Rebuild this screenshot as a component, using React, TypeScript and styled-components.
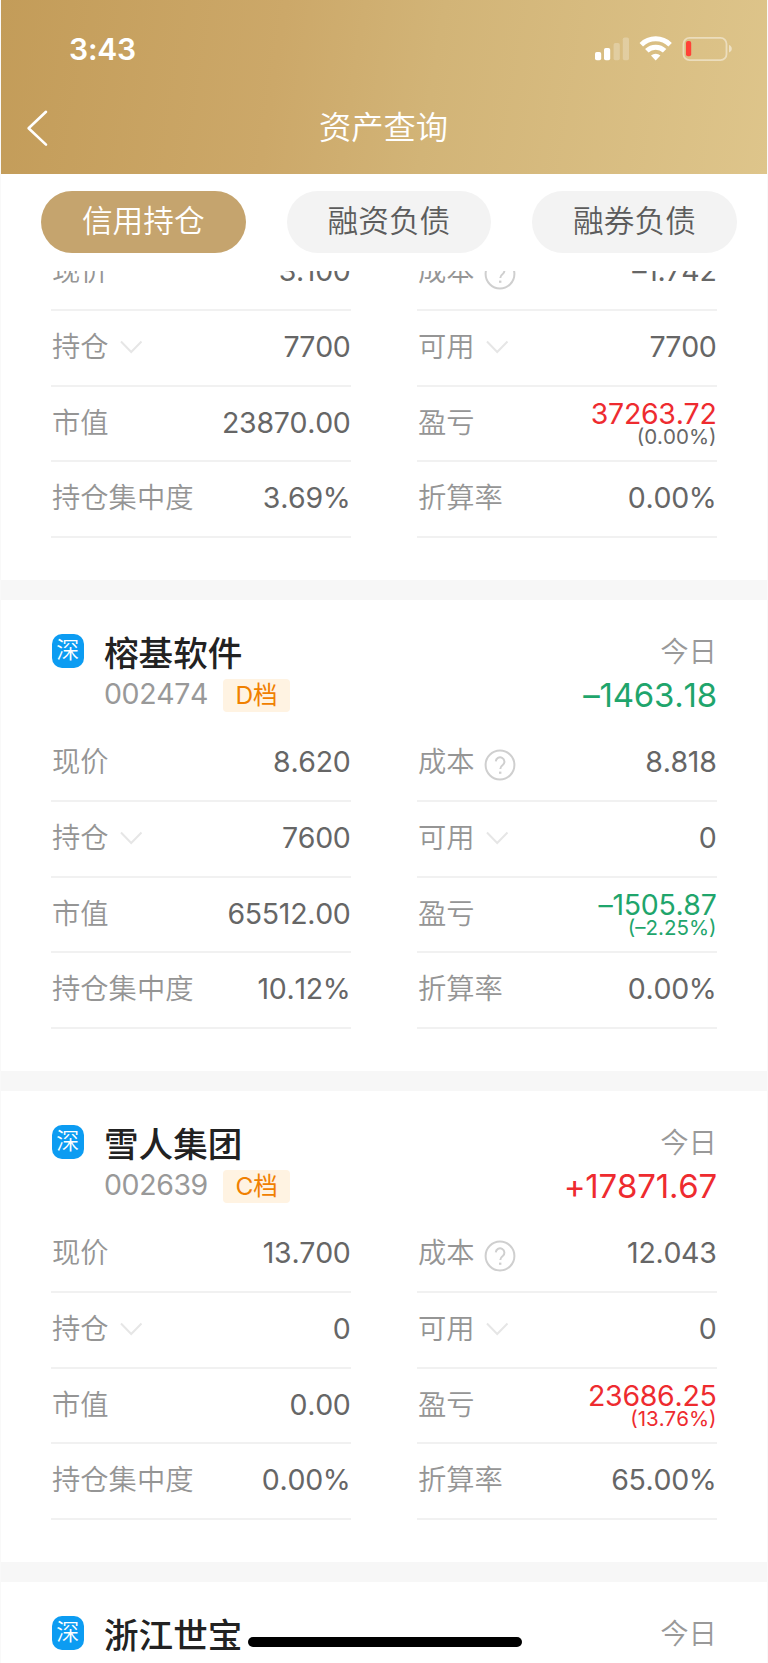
import React from "react";
import styled, { createGlobalStyle } from "styled-components";

const GlobalStyle = createGlobalStyle`
  * { box-sizing: border-box; }
  body {
    margin: 0;
    background: #fff;
    font-family: Inter, "Noto Sans CJK SC", sans-serif;
    font-kerning: none;
    color: #666;
  }
`;

const gold = "linear-gradient(99deg, #c39c59 0%, #cca869 36%, #d2b477 56%, #dec58b 100%)";
const tones = { plain: "#666", up: "#ee2b2f", down: "#1fa56c" };
type Tone = keyof typeof tones;

const Screen = styled.div`
  position: relative;
  display: flex;
  flex-direction: column;
  width: 768px;
  height: 1663px;
  overflow: hidden;
  background: #fff;
  border-left: 1px solid #f9f9f9;
  border-right: 1px solid #f9f9f9;
`;

const Header = styled.header`
  flex: none;
  height: 174px;
  margin: 0 -1px;
  color: #fff;
  background: ${gold};
`;

const StatusBar = styled.div`
  display: flex;
  align-items: center;
  justify-content: space-between;
  height: 82px;
  padding: 16px 36px 0 69px;
`;

const Clock = styled.span`
  font-size: 30px;
  font-weight: 600;
  line-height: 36px;
  letter-spacing: -0.2px;
`;

const NavBar = styled.div`
  display: grid;
  grid-template-columns: 80px 1fr 80px;
  align-items: center;
  height: 92px;
`;

const BackButton = styled.button`
  display: flex;
  padding: 0 0 0 26px;
  border: 0;
  background: none;
`;

const Title = styled.h1`
  margin: 0 1px 0 0;
  font-size: 32.3px;
  font-weight: 350;
  line-height: 40px;
  text-align: center;
`;

const Tabs = styled.nav`
  flex: none;
  display: flex;
  gap: 41px;
  height: 97px;
  padding: 17px 0 0 40px;
`;

const Tab = styled.button<{ $active?: boolean }>`
  width: 204.6px;
  height: 61.5px;
  padding: 0 0 2px;
  border: 0;
  border-radius: 31px;
  font-family: inherit;
  font-size: 30.7px;
  font-weight: 350;
  line-height: 56px;
  color: ${(p) => (p.$active ? "#fff" : "#5c5c5c")};
  background: ${(p) => (p.$active ? "#c5a46e" : "#f3f3f3")};
`;

const List = styled.main`
  flex: 1;
  min-height: 0;
  overflow: hidden;
`;

const Cards = styled.div`
  margin-top: -161.8px;
`;

const Card = styled.section`
  height: 491px;
  padding: 0 50px;
  border-bottom: 20.7px solid #f7f7f7;
`;

const CardHead = styled.div`
  display: flex;
  height: 126.3px;
  padding: 34px 0 0 0.5px;
`;

const Market = styled.span`
  flex: none;
  width: 32.5px;
  height: 34px;
  border-radius: 10px;
  background: #0c9cf2;
  color: #fff;
  font-size: 23px;
  font-weight: 350;
  line-height: 33px;
  text-align: center;
`;

const Identity = styled.div`
  flex: 1;
  padding-left: 20px;
`;

const Name = styled.h2`
  margin: 0;
  padding-top: 1px;
  font-size: 34.6px;
  font-weight: 500;
  line-height: 36px;
  color: #222;
`;

const CodeLine = styled.div`
  display: flex;
  align-items: center;
  gap: 15.5px;
  height: 33px;
  margin-top: 8px;
`;

const Code = styled.span`
  font-size: 28.5px;
  font-weight: 370;
  line-height: 30px;
  letter-spacing: -0.4px;
  color: #999;
  padding-bottom: 3px;
`;

const Grade = styled.span`
  height: 33px;
  padding: 0 12px;
  border-radius: 4px;
  background: #fff3e2;
  color: #f08000;
  font-size: 24.5px;
  font-weight: 370;
  line-height: 32px;
`;

const Today = styled.div`
  text-align: right;
  font-weight: 350;
`;

const TodayLabel = styled.div`
  font-size: 28.4px;
  line-height: 36px;
  color: #999;
`;

const TodayValue = styled.div<{ $tone: Tone }>`
  margin-top: 7px;
  font-size: 33px;
  font-weight: 370;
  line-height: 36px;
  letter-spacing: -0.2px;
  color: ${(p) => tones[p.$tone]};
`;

const Grid = styled.div`
  display: grid;
  grid-template-columns: 299.5px 299.5px;
  justify-content: space-between;
  padding-right: 0.5px;
  grid-auto-rows: 75.65px;
`;

const Cell = styled.div`
  display: flex;
  align-items: center;
  justify-content: space-between;
  padding: 0 0 2px 1px;
  border-bottom: 2px solid #f1f1f1;
`;

const Label = styled.span`
  display: flex;
  align-items: center;
  gap: 10px;
  font-size: 28.3px;
  font-weight: 350;
  line-height: 36px;
  color: #959595;
`;

const Value = styled.span<{ $tone: Tone }>`
  font-size: 28.5px;
  font-weight: 370;
  line-height: 30px;
  letter-spacing: -0.3px;
  text-align: right;
  color: ${(p) => tones[p.$tone]};
`;

const Percent = styled.small<{ $tone: Tone }>`
  display: block;
  margin: -1px 0 2px;
  font-size: 20.5px;
  line-height: 17px;
  letter-spacing: 0;
  color: ${(p) => tones[p.$tone]};
`;

const HelpMark = styled.svg`
  margin: 5px 0 0 -1px;
`;

const HomeIndicator = styled.div`
  position: absolute;
  left: 246.5px;
  bottom: 16.5px;
  width: 274px;
  height: 10px;
  border-radius: 5px;
  background: #000;
`;

const StatusIcons = () => (
  <svg width="138" height="28" viewBox="594 35 138 28" fill="#fff">
    <rect x="595" y="52" width="6.2" height="8.2" rx="1.8" />
    <rect x="604" y="48" width="6.2" height="12.2" rx="1.8" />
    <g opacity="0.25">
      <rect x="613.6" y="43" width="6.2" height="17.2" rx="1.8" />
      <rect x="622.8" y="37.5" width="6.2" height="22.7" rx="1.8" />
    </g>
    <g fill="none" stroke="#fff" strokeWidth="5">
      <path d="M641.3 44.7a20.7 20.7 0 0 1 28.8 0" />
      <path d="M646.8 50.8a12.9 12.9 0 0 1 17.8 0" />
    </g>
    <path d="M651 55.6a7 7 0 0 1 9.4 0L655.7 60.5z" />
    <rect x="683.5" y="37.8" width="43" height="22.4" rx="6" fill="none" stroke="#fff" strokeOpacity="0.45" strokeWidth="1.8" />
    <path d="M729 45v7.4c1.8-.6 2.8-2 2.8-3.7s-1-3.1-2.8-3.7z" opacity="0.5" />
    <rect x="686" y="41" width="5.2" height="15.2" rx="2" fill="#ff4237" />
  </svg>
);

const Chevron = () => (
  <svg width="24" height="16" viewBox="0 0 24 16" fill="none" stroke="#e6e6e6" strokeWidth="2">
    <path d="M2 2.5l10.2 10.5L22.5 2.5" />
  </svg>
);

const Help = () => (
  <HelpMark width="32" height="32" viewBox="0 0 32 32" fill="none" stroke="#cfcfcf" strokeWidth="2">
    <circle cx="16" cy="16" r="14.4" />
    <path d="M11.8 12.4a4.3 4.3 0 1 1 6.9 3.6c-1.8 1.3-2.4 1.9-2.4 4.1" />
    <path d="M16.2 22.6v2.2" strokeWidth="2.4" />
  </HelpMark>
);

interface Holding {
  name: string;
  code: string;
  grade: string;
  today: string;
  todayTone: Tone;
  price: string;
  cost: string;
  held: string;
  available: string;
  marketValue: string;
  profit: string;
  profitTone: Tone;
  percent: string;
  percentTone: Tone;
  concentration: string;
  rate: string;
}

const holdings: Holding[] = [
  {
    name: "", code: "", grade: "", today: "", todayTone: "plain",
    price: "3.100", cost: "–1.742", held: "7700", available: "7700",
    marketValue: "23870.00", profit: "37263.72", profitTone: "up",
    percent: "(0.00%)", percentTone: "plain", concentration: "3.69%", rate: "0.00%",
  },
  {
    name: "榕基软件", code: "002474", grade: "D档", today: "–1463.18", todayTone: "down",
    price: "8.620", cost: "8.818", held: "7600", available: "0",
    marketValue: "65512.00", profit: "–1505.87", profitTone: "down",
    percent: "(–2.25%)", percentTone: "down", concentration: "10.12%", rate: "0.00%",
  },
  {
    name: "雪人集团", code: "002639", grade: "C档", today: "+17871.67", todayTone: "up",
    price: "13.700", cost: "12.043", held: "0", available: "0",
    marketValue: "0.00", profit: "23686.25", profitTone: "up",
    percent: "(13.76%)", percentTone: "up", concentration: "0.00%", rate: "65.00%",
  },
];

interface FieldProps {
  label: string;
  value: string;
  tone?: Tone;
  icon?: React.ReactNode;
  children?: React.ReactNode;
}

const Field = ({ label, value, tone = "plain", icon, children }: FieldProps) => (
  <Cell>
    <Label>{label}{icon}</Label>
    <Value $tone={tone}>{value}{children}</Value>
  </Cell>
);

const HoldingCard = ({ item }: { item: Holding }) => (
  <Card>
    <CardHead>
      {item.name && (
        <>
          <Market>深</Market>
          <Identity>
            <Name>{item.name}</Name>
            <CodeLine>
              <Code>{item.code}</Code>
              <Grade>{item.grade}</Grade>
            </CodeLine>
          </Identity>
          <Today>
            <TodayLabel>今日</TodayLabel>
            <TodayValue $tone={item.todayTone}>{item.today}</TodayValue>
          </Today>
        </>
      )}
    </CardHead>
    <Grid>
      <Field label="现价" value={item.price} />
      <Field label="成本" value={item.cost} icon={<Help />} />
      <Field label="持仓" value={item.held} icon={<Chevron />} />
      <Field label="可用" value={item.available} icon={<Chevron />} />
      <Field label="市值" value={item.marketValue} />
      <Field label="盈亏" value={item.profit} tone={item.profitTone}>
        <Percent $tone={item.percentTone}>{item.percent}</Percent>
      </Field>
      <Field label="持仓集中度" value={item.concentration} />
      <Field label="折算率" value={item.rate} />
    </Grid>
  </Card>
);

export default function App() {
  return (
    <Screen>
      <GlobalStyle />
      <Header>
        <StatusBar>
          <Clock>3:43</Clock>
          <StatusIcons />
        </StatusBar>
        <NavBar>
          <BackButton aria-label="返回">
            <svg width="24" height="38" viewBox="0 0 24 38" fill="none" stroke="#fff" strokeWidth="2.6" strokeLinecap="round" strokeLinejoin="round">
              <path d="M20 2.8L2.6 19.2L20 35.6" />
            </svg>
          </BackButton>
          <Title>资产查询</Title>
        </NavBar>
      </Header>
      <Tabs>
        <Tab $active>信用持仓</Tab>
        <Tab>融资负债</Tab>
        <Tab>融券负债</Tab>
      </Tabs>
      <List>
        <Cards>
          {holdings.map((item) => (
            <HoldingCard key={item.price} item={item} />
          ))}
          <Card>
            <CardHead>
              <Market>深</Market>
              <Identity>
                <Name>浙江世宝</Name>
              </Identity>
              <Today>
                <TodayLabel>今日</TodayLabel>
              </Today>
            </CardHead>
          </Card>
        </Cards>
      </List>
      <HomeIndicator />
    </Screen>
  );
}
